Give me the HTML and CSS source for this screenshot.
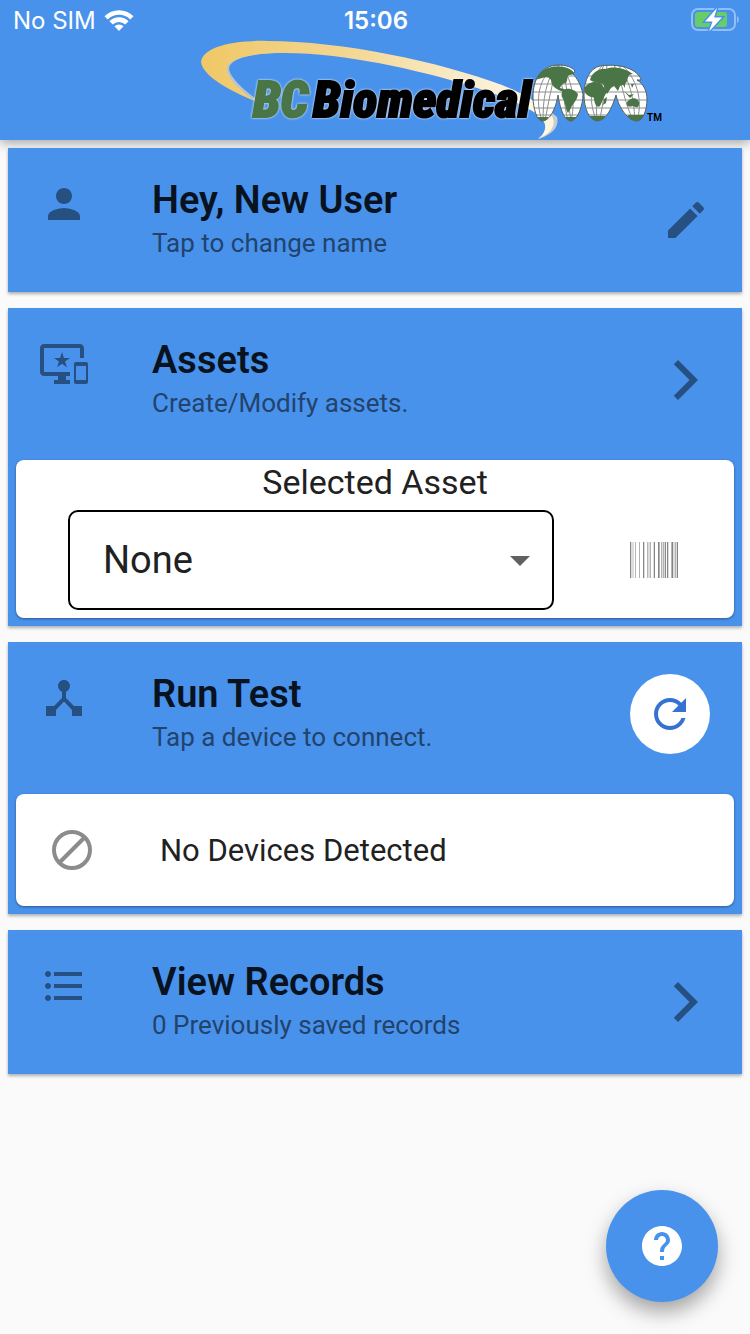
FILE: index.html
```html
<!DOCTYPE html>
<html lang="en">
<head>
<meta charset="utf-8">
<meta name="viewport" content="width=device-width, initial-scale=1">
<title>BC Biomedical</title>
<link rel="stylesheet" href="styles.css">
</head>
<body>
<header class="app-bar">
  <div class="status">
    <div class="status-left">
      <span>No SIM</span>
      <svg class="wifi" viewBox="0 0 30 22" aria-hidden="true">
        <path d="M0.5 7.2a20.5 20.5 0 0 1 29 0l-3.300 3.300a15.800 15.800 0 0 0-22.400 0zM5.400 12.200a13.600 13.600 0 0 1 19.200 0l-3.400 3.400a8.800 8.800 0 0 0-12.400 0zM10.400 17.300a6.500 6.500 0 0 1 9.200 0L15 22z"/>
      </svg>
    </div>
    <time class="clock">15:06</time>
    <div class="status-right">
      <svg class="battery" viewBox="0 0 48 26" role="img" aria-label="Battery charging">
        <rect class="battery-shell" x="1" y="2" width="43" height="21" rx="6"/>
        <path class="battery-tip" d="M46 9v7c2.500-1 2.500-6 0-7z"/>
        <rect class="battery-level" x="4" y="5" width="32" height="15" rx="3"/>
        <path class="battery-bolt" d="M26 1L14 14.500h7.500L18 24.500 31 10.500h-8z"/>
      </svg>
    </div>
  </div>
  <svg class="logo" viewBox="200 40 464 100" role="img" aria-label="BC Biomedical">
    <defs>
      <linearGradient id="gold" x1="0" x2="1" y1="0" y2="0">
        <stop offset="0" stop-color="#efc866"/>
        <stop offset="0.400" stop-color="#f3d590"/>
        <stop offset="0.750" stop-color="#faebc8"/>
        <stop offset="1" stop-color="#fffaf0"/>
      </linearGradient>
      <clipPath id="globes">
        <path d="M558 65C540 66 533 80 533 97C533 108 537 121 542 121C550 121 556 108 558 95C560 108 564 121 571 121C578 120 583 105 583 94C581 85 577 78 573 74L575 71C572 67 566 65 558 65z"/>
        <path d="M584 95C584 80 590 68 600 66C612 64 625 66 632 70C636 72 641 77 641 80L637 80C644 84 647 92 647 99C647 110 643 121 637 121C628 121 619 108 616 95C612 108 606 121 597 121C589 120 584 108 584 95z"/>
      </clipPath>
    </defs>
    <path fill="#b9c3d0" d="M257 102C238 91 225 77 226 68C230 53 270 51 290 53C272 52 232 54 229 68C229 76 242 89 259 101z"/>
    <path fill="url(#gold)" d="M257 102C228 90 203 76 201 62C203 44 244 40 267 41C343 41 440 62 502 85C550 104 562 124 538 139C550 130 549 119 525 107C490 88 400 64 333 56C280 50 231 53 227 68C226 77 240 91 257 102z"/>
    <path fill="#c9ccd0" d="M548 118C550 129 545 135 538 139C555 134 559 125 557 117L551 112z"/>
    <path fill="#fff6df" d="M544 118C547 127 545 134 538 139C553 133 556 124 552 116z"/>
    <g class="wordmark">
      <text class="word-bc" x="253" y="117">BC</text>
      <text class="word-bio" x="313" y="117">Biomedical</text>
    </g>
    <g clip-path="url(#globes)">
      <path fill="#fff" d="M530 60h120v64H530z"/>
      <g fill="none" stroke="#8d8d8d" stroke-width="1">
        <path d="M530 76h120M530 84h120M530 92h120M530 100h120M530 108h120M530 115h120"/>
        <path d="M556 65C538 78 535 100 542 121M557 65C545 82 543 100 543 121M558 65C552 82 548 105 545 121M561 65C574 82 575 105 571 121M559 65C568 80 568 105 571 121M558 65C562 80 564 105 568 121M603 65C588 80 589 105 597 121M604 65C595 80 596 105 597 121M607 65C605 80 604 105 599 121M622 65C640 82 642 105 637 121M618 65C632 82 634 105 635 121M614 65C623 82 624 105 634 121"/>
      </g>
      <g fill="#4a7546">
        <path d="M535 80C538 71 548 66 558 67C565 66 572 69 575 74L570 75C567 74 568 80 566 83C563 83 561 85 560 88L564 89L567 92L561 91C556 89 551 86 551 80C548 75 543 78 535 80z"/>
        <path d="M563 90C569 87 575 90 578 94C577 101 573 103 571 108L568 113C565 109 566 103 563 99C561 96 561 93 563 90z"/>
        <path d="M590 80C592 72 600 68 606 69C614 66 625 68 633 74C626 74 629 81 625 84L620 86L618 91L614 86L611 88L607 94L603 84C598 82 595 83 590 80z"/>
        <path d="M584 89C587 82 596 80 602 84C604 89 607 90 608 92C604 94 603 101 600 106C597 109 594 103 594 98C591 96 585 97 584 89zM604 99l3-2-1 6-3 2zM624 91l5 4 5-1-4 4zM627 102C630 98 637 96 639 102C640 108 636 108 633 106C629 107 626 107 627 102z"/>
        <path d="M536 117h12v6h-12zM564 117h13v6h-13zM589 116h16v6h-16zM628 115h18v7h-18zM622 83l3 1 0 4zM631 84l3 0-2 4z"/>
      </g>
    </g>
    <g fill="none" stroke="#53615a" stroke-width="1">
      <path d="M558 65C540 66 533 80 533 97C533 108 537 121 542 121C550 121 556 108 558 95C560 108 564 121 571 121C578 120 583 105 583 94C581 85 577 78 573 74L575 71C572 67 566 65 558 65z"/>
      <path d="M584 95C584 80 590 68 600 66C612 64 625 66 632 70C636 72 641 77 641 80L637 80C644 84 647 92 647 99C647 110 643 121 637 121C628 121 619 108 616 95C612 108 606 121 597 121C589 120 584 108 584 95z"/>
    </g>
    <text class="word-tm" x="647" y="121">TM</text>
  </svg>
</header>

<main class="cards">
  <section class="card">
    <div class="card-head">
      <svg class="icon lead" viewBox="0 0 24 24" aria-hidden="true"><path d="M12 12c2.210 0 4-1.790 4-4s-1.790-4-4-4-4 1.790-4 4 1.790 4 4 4zm0 2c-2.670 0-8 1.340-8 4v2h16v-2c0-2.660-5.330-4-8-4z"/></svg>
      <div class="card-text">
        <h2 class="title">Hey, New User</h2>
        <p class="subtitle">Tap to change name</p>
      </div>
      <button class="icon-button" type="button" aria-label="Change name">
        <svg class="icon" viewBox="0 0 24 24" aria-hidden="true"><path d="M3 17.250V21h3.750L17.810 9.940l-3.750-3.750L3 17.250zM20.710 7.040a1 1 0 0 0 0-1.410l-2.340-2.340a1 1 0 0 0-1.410 0l-1.830 1.830 3.750 3.750 1.830-1.830z"/></svg>
      </button>
    </div>
  </section>

  <section class="card">
    <div class="card-head">
      <svg class="icon lead" viewBox="0 0 24 24" aria-hidden="true"><path d="M23 11.010L18 11c-.55 0-1 .45-1 1v9c0 .55.45 1 1 1h5c.55 0 1-.45 1-1v-9c0-.55-.45-.99-1-.99zM23 20h-5v-7h5v7zM20 2H2C.89 2 0 2.890 0 4v12c0 1.100.89 2 2 2h7v2H7v2h8v-2h-2v-2h2v-2H2V4h18v5h2V4c0-1.110-.9-2-2-2zm-8.030 7L11 6l-.97 3H7l2.470 1.760-.94 2.910 2.470-1.800 2.470 1.800-.94-2.910L15 9h-3.030z"/></svg>
      <div class="card-text">
        <h2 class="title">Assets</h2>
        <p class="subtitle">Create/Modify assets.</p>
      </div>
      <button class="icon-button" type="button" aria-label="Open assets">
        <svg class="icon" viewBox="0 0 24 24" aria-hidden="true"><path d="M5.880 4.120L13.760 12l-7.880 7.880L8 22l10-10L8 2z"/></svg>
      </button>
    </div>
    <div class="panel">
      <label class="asset-label" for="asset">Selected Asset</label>
      <div class="asset-row">
        <div class="select-box">
          <select class="select" id="asset"><option>None</option></select>
          <svg class="caret" viewBox="0 0 20 10" aria-hidden="true"><path d="M0 0h20L10 10z"/></svg>
        </div>
        <button class="icon-button" type="button" aria-label="Scan barcode">
          <svg class="barcode" viewBox="0 0 48 36" aria-hidden="true">
            <path fill="#dcdcdc" d="M1 0h3v36H1zM13 0h2v36h-2zM17 0h4v36h-4zM23 0h1v36h-1zM31 0h2v36h-2zM34 0h1v36h-1zM38 0h1v36h-1zM43 0h4v36h-4z"/>
            <path fill="#b4b4b4" d="M5 0h1v36H5zM9 0h1v36H9zM17 0h1v36h-1zM20 0h1v36h-1zM29 0h1v36h-1zM31 0h1v36h-1zM33 0h1v36h-1zM41 0h1v36h-1zM45 0h1v36h-1z"/>
            <path fill="#858585" d="M0 0h1v36H0zM13 0h1v36h-1zM24 0h1v36h-1zM28 0h1v36h-1zM35 0h1v36h-1zM37 0h1v36h-1zM42 0h1v36h-1zM47 0h1v36h-1z"/>
          </svg>
        </button>
      </div>
    </div>
  </section>

  <section class="card">
    <div class="card-head">
      <svg class="icon lead" viewBox="0 0 24 24" aria-hidden="true"><path d="M17 16l-4-4V8.820C14.160 8.400 15 7.300 15 6c0-1.660-1.340-3-3-3S9 4.340 9 6c0 1.300.84 2.400 2 2.820V12l-4 4H3v5h5v-3.050l4-4.200 4 4.200V21h5v-5h-4z"/></svg>
      <div class="card-text">
        <h2 class="title">Run Test</h2>
        <p class="subtitle">Tap a device to connect.</p>
      </div>
      <button class="refresh" type="button" aria-label="Refresh devices">
        <svg class="refresh-icon" viewBox="0 0 24 24" aria-hidden="true"><path d="M17.650 6.350C16.200 4.900 14.210 4 12 4c-4.420 0-7.990 3.580-7.990 8s3.570 8 7.990 8c3.730 0 6.840-2.550 7.730-6h-2.080c-.82 2.330-3.040 4-5.650 4-3.310 0-6-2.690-6-6s2.690-6 6-6c1.660 0 3.140.69 4.220 1.780L13 11h7V4l-2.350 2.350z"/></svg>
      </button>
    </div>
    <div class="panel device">
      <svg class="none-icon" viewBox="0 0 48 48" aria-hidden="true"><circle cx="24" cy="24" r="18"/><path d="M11.500 36.500l25-25"/></svg>
      <span>No Devices Detected</span>
    </div>
  </section>

  <section class="card">
    <div class="card-head">
      <svg class="icon lead" viewBox="0 0 24 24" aria-hidden="true"><path d="M4 10.500c-.83 0-1.500.67-1.500 1.500s.67 1.500 1.500 1.500 1.500-.67 1.500-1.500-.67-1.500-1.500-1.500zm0-6c-.83 0-1.500.67-1.500 1.500S3.170 7.500 4 7.500 5.500 6.830 5.500 6 4.830 4.500 4 4.500zm0 12c-.83 0-1.500.68-1.500 1.500s.68 1.500 1.500 1.500 1.500-.68 1.500-1.500-.67-1.500-1.500-1.500zM7 19h14v-2H7v2zm0-6h14v-2H7v2zm0-8v2h14V5H7z"/></svg>
      <div class="card-text">
        <h2 class="title">View Records</h2>
        <p class="subtitle">0 Previously saved records</p>
      </div>
      <button class="icon-button" type="button" aria-label="Open records">
        <svg class="icon" viewBox="0 0 24 24" aria-hidden="true"><path d="M5.880 4.120L13.760 12l-7.880 7.880L8 22l10-10L8 2z"/></svg>
      </button>
    </div>
  </section>
</main>

<button class="fab" type="button" aria-label="Help">
  <svg class="fab-icon" viewBox="0 0 24 24" aria-hidden="true"><path d="M12 2C6.480 2 2 6.480 2 12s4.480 10 10 10 10-4.480 10-10S17.520 2 12 2zm1 17h-2v-2h2v2zm2.070-7.750l-.9.920C13.450 12.900 13 13.500 13 15h-2v-.5c0-1.100.45-2.100 1.170-2.830l1.240-1.260c.37-.36.59-.86.59-1.410 0-1.100-.9-2-2-2s-2 .9-2 2H8c0-2.210 1.790-4 4-4s4 1.790 4 4c0 .88-.36 1.680-.93 2.250z"/></svg>
</button>
</body>
</html>
```

FILE: styles.css
```css
* {
  box-sizing: border-box;
}

body {
  margin: 0;
  min-height: 100vh;
  background: #fafafa;
  color: #212121;
  font-family: Roboto, "Noto Sans", sans-serif;
}

h2,
p {
  margin: 0;
}

button {
  border: 0;
  padding: 0;
  background: none;
  cursor: pointer;
}

svg {
  display: block;
}

.app-bar {
  display: flex;
  flex-direction: column;
  align-items: center;
  background: #4992ec;
  box-shadow: 0 2px 12px rgba(0, 0, 0, 0.4);
}

.status {
  display: grid;
  grid-template-columns: 1fr auto 1fr;
  align-items: center;
  width: 100%;
  height: 40px;
  padding: 0 11px 0 13px;
  color: #fff;
  font-family: Inter, sans-serif;
  font-size: 24px;
}

.status-left {
  display: flex;
  align-items: center;
  gap: 8px;
}

.status-right {
  display: flex;
  justify-content: flex-end;
}

.wifi {
  width: 30px;
  height: 22px;
  fill: #fff;
}

.clock {
  font-weight: 600;
}

.battery {
  width: 48px;
  height: 26px;
}

.battery-shell {
  fill: none;
  stroke: #92bef4;
  stroke-width: 2;
}

.battery-tip {
  fill: #92bef4;
}

.battery-level {
  fill: #67ce67;
}

.battery-bolt {
  fill: #fff;
  stroke: #4992ec;
  stroke-width: 3;
  paint-order: stroke;
}

.logo {
  width: 464px;
  height: 100px;
  margin-right: -114px;
}

.wordmark {
  font-family: "Roboto Condensed", Roboto, sans-serif;
  font-size: 50px;
  font-style: italic;
  font-weight: 900;
  stroke-width: 2;
  filter: drop-shadow(0 0 1px #fff);
}

.word-bc {
  fill: #4a7546;
  stroke: #4a7546;
}

.word-bio {
  fill: #000;
  stroke: #000;
}

.word-tm {
  font-size: 10px;
  font-weight: 700;
}

.cards {
  display: flex;
  flex-direction: column;
  gap: 16px;
  padding: 8px;
}

.card {
  background: #4992ec;
  box-shadow: 0 2px 3px rgba(0, 0, 0, 0.3);
}

.card-head {
  display: flex;
  align-items: center;
  min-height: 144px;
  padding: 24px 32px;
}

.icon {
  width: 48px;
  height: 48px;
  fill: #275082;
}

.lead {
  align-self: flex-start;
  margin: 8px 64px 0 0;
}

.card-text {
  flex: 1;
  padding-bottom: 2px;
}

.title {
  color: #08131f;
  font-size: 38px;
  font-weight: 600;
  line-height: 48px;
}

.subtitle {
  color: #21436c;
  font-size: 26px;
  line-height: 38px;
}

.panel {
  margin: 8px 8px 0;
  border-radius: 8px;
  background: #fff;
  box-shadow: 0 1px 3px rgba(0, 0, 0, 0.4);
}

.card:has(.panel) {
  padding-bottom: 8px;
}

.asset-label {
  display: block;
  padding-top: 2px;
  font-size: 34px;
  line-height: 40px;
  text-align: center;
}

.asset-row {
  display: flex;
  align-items: center;
  gap: 76px;
  padding: 8px 56px 8px 52px;
}

.select-box {
  position: relative;
  flex: 1;
}

.select {
  display: block;
  width: 100%;
  height: 100px;
  padding: 0 56px 0 33px;
  border: 2px solid #000;
  border-radius: 10px;
  appearance: none;
  background: #fff;
  color: #212121;
  font-family: inherit;
  font-size: 38px;
}

.caret {
  position: absolute;
  top: 46px;
  right: 24px;
  width: 20px;
  height: 10px;
  fill: #616161;
  pointer-events: none;
}

.barcode {
  width: 48px;
  height: 36px;
}

.refresh {
  display: grid;
  place-items: center;
  width: 80px;
  height: 80px;
  border-radius: 50%;
  background: #fff;
}

.refresh-icon {
  width: 48px;
  height: 48px;
  fill: #3673d0;
}

.device {
  display: flex;
  align-items: center;
  gap: 64px;
  min-height: 112px;
  padding: 0 32px;
  font-size: 31px;
}

.none-icon {
  width: 48px;
  height: 48px;
  fill: none;
  stroke: #8c8c8c;
  stroke-width: 4;
}

.fab {
  position: fixed;
  right: 32px;
  bottom: 32px;
  display: grid;
  place-items: center;
  width: 112px;
  height: 112px;
  border-radius: 50%;
  background: #4992ec;
  box-shadow: 0 10px 20px rgba(0, 0, 0, 0.35);
}

.fab-icon {
  width: 48px;
  height: 48px;
  fill: #fff;
}
```
